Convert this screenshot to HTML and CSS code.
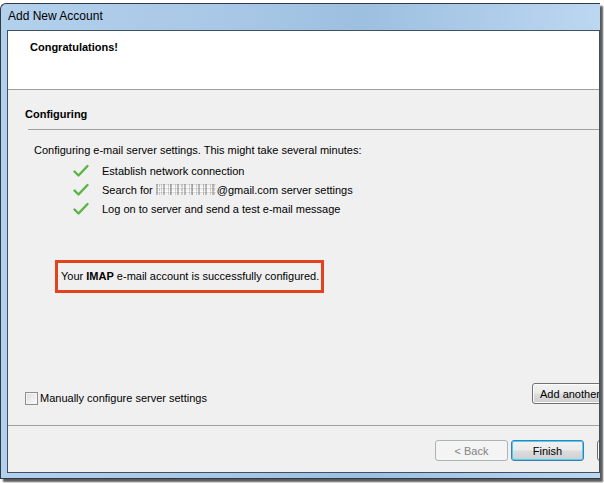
FILE: index.html
```html
<!DOCTYPE html>
<html lang="en">
<head>
  <meta charset="UTF-8">
  <title>Add New Account</title>
  <link rel="stylesheet" href="styles.css">
</head>
<body>

  <div class="window">
    <div class="titlebar">Add New Account</div>

    <div class="client">
      <div class="header">
        <div class="header-title">Congratulations!</div>
      </div>

      <div class="main">
        <div class="section-title">Configuring</div>
        <div class="section-rule"></div>

        <p class="intro">Configuring e-mail server settings. This might take several minutes:</p>

        <ul class="steps">
          <li>
            <svg class="check" viewBox="0 0 16 14" width="16" height="14">
              <path d="M1.5 7.5 L5.5 11.5 L14.5 2" fill="none" stroke="#5cb443" stroke-width="2.4" stroke-linecap="round" stroke-linejoin="round"/>
            </svg>
            Establish network connection
          </li>
          <li>
            <svg class="check" viewBox="0 0 16 14" width="16" height="14">
              <path d="M1.5 7.5 L5.5 11.5 L14.5 2" fill="none" stroke="#5cb443" stroke-width="2.4" stroke-linecap="round" stroke-linejoin="round"/>
            </svg>
            Search for&nbsp;<span class="blurred"></span>@gmail.com server settings
          </li>
          <li>
            <svg class="check" viewBox="0 0 16 14" width="16" height="14">
              <path d="M1.5 7.5 L5.5 11.5 L14.5 2" fill="none" stroke="#5cb443" stroke-width="2.4" stroke-linecap="round" stroke-linejoin="round"/>
            </svg>
            Log on to server and send a test e-mail message
          </li>
        </ul>

        <div class="success">Your <b>IMAP</b> e-mail account is successfully configured.</div>

        <div class="options">
          <label class="manual"><span class="checkbox"></span>Manually configure server settings</label>
          <button class="btn btn-another">Add another Account...</button>
        </div>
      </div>

      <div class="footer">
        <button class="btn btn-disabled">&lt; Back</button>
        <button class="btn btn-default">Finish</button>
        <button class="btn btn-cancel">Cancel</button>
      </div>
    </div>
  </div>

</body>
</html>
```

FILE: styles.css
```css
body { margin: 0; width: 604px; height: 483px; overflow: hidden; background: #fff; font-family: "Liberation Sans", Arial, sans-serif; font-size: 11px; color: #000; }

.window { box-sizing: border-box; margin-top: 3px; width: 600px; height: 476px; padding: 0 0 5px 6px; display: flex; flex-direction: column; border: 1px solid #2f3a46; border-right: none; border-radius: 6px 0 0 0; background: linear-gradient(90deg, #b3d0ec 0%, #a8c7e6 40%, #9dbfe0 60%, #bcd7f1 100%); box-shadow: 3px 3px 2px rgba(0,0,0,.65); }

.titlebar { height: 26px; line-height: 24px; padding-left: 1px; font-size: 12px; color: #000; }

.client { flex: 1; display: flex; flex-direction: column; overflow: hidden; background: #f0f0f0; border: 1px solid #3f5066; }

.header { height: 58px; flex: none; background: #fff; border-bottom: 1px solid #a0a0a0; }
.header-title { padding: 9px 0 0 22px; font-weight: bold; line-height: 14px; }

.main { flex: 1; display: flex; flex-direction: column; padding: 17px 0 0 17px; }
.section-title { font-weight: bold; line-height: 14px; }
.section-rule { height: 1px; margin: 8px 0 0 3px; background: #a0a0a0; }

.intro { margin: 13px 0 0 9px; line-height: 14px; }

.steps { list-style: none; margin: 4px 0 0 0; padding: 0 0 0 48px; }
.steps li { display: flex; align-items: center; height: 19px; white-space: nowrap; }
.check { flex: none; margin-right: 13px; }

.blurred { display: inline-block; width: 60px; height: 11px; margin-right: 1px; background-color: #f4f4f4;
  background-image:
    linear-gradient(90deg, rgba(110,110,110,.45) 0 2px, transparent 2px 5px, rgba(150,150,150,.4) 5px 6px, transparent 6px),
    linear-gradient(0deg, rgba(255,255,255,.8) 0 1px, transparent 1px 3px, rgba(200,200,200,.6) 3px 4px, transparent 4px),
    linear-gradient(90deg, transparent 0 3px, rgba(90,90,90,.3) 3px 4px, transparent 4px);
  background-size: 7px 5px, 9px 4px, 11px 3px; }

.success { align-self: flex-start; box-sizing: border-box; width: 269px; height: 33px; margin: 42px 0 0 30px; padding-left: 3px; line-height: 27px; white-space: nowrap; border: 3px solid #e2431d; }

.options { margin-top: auto; margin-bottom: 20px; display: flex; align-items: flex-end; }
.manual { display: flex; align-items: center; height: 14px; }
.checkbox { box-sizing: border-box; width: 13px; height: 13px; margin-right: 2px; border: 1px solid #8e8f8f; background: linear-gradient(135deg, #dcdcdc, #fdfdfd); box-shadow: inset 0 0 0 1px #f4f4f4; }

.btn { box-sizing: border-box; height: 21px; padding: 0; font-family: inherit; font-size: 11px; color: #000; white-space: nowrap; border: 1px solid #707070; border-radius: 3px; background: linear-gradient(#f2f2f2 0%, #ebebeb 48%, #dddddd 52%, #cfcfcf 100%); box-shadow: inset 0 0 0 1px #fcfcfc; }
.btn-another { width: 115px; height: 21px; margin: 0 -48px 1px auto; text-align: left; padding-left: 7px; }

.footer { height: 47px; flex: none; box-sizing: border-box; border-top: 1px solid #a0a0a0; display: flex; align-items: flex-start; gap: 3px; padding: 14px 0 0 427px; }
.footer .btn { width: 73px; flex: none; }
.btn-disabled { color: #838383; border-color: #adb2b5; background: #f4f4f4; box-shadow: none; }
.btn-default { border-color: #3c7fb1; box-shadow: inset 0 0 0 1px #48d0f8; }
.btn-cancel { margin-left: 10px; }
```
